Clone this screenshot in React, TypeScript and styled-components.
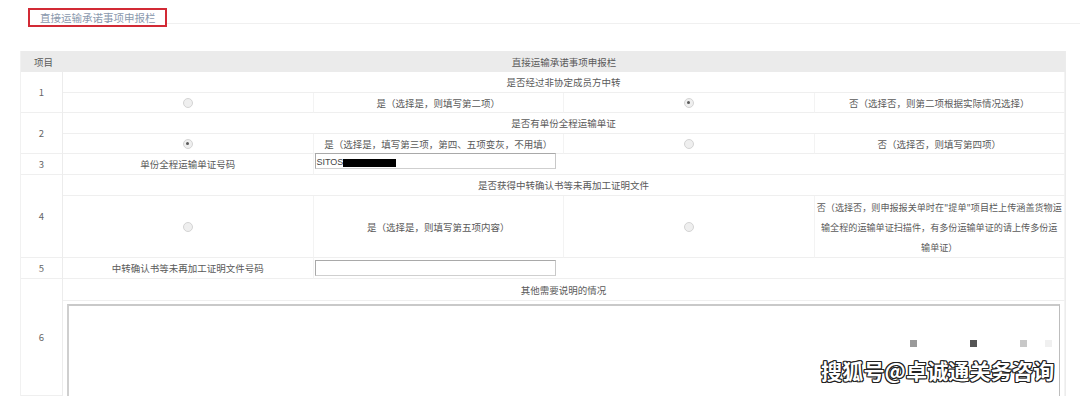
import React from "react";
import styled, { createGlobalStyle } from "styled-components";

const GlobalStyle = createGlobalStyle`
  html, body {
    margin: 0;
    padding: 0;
    background: #ffffff;
    font-family: "Noto Sans CJK SC", "Noto Sans", sans-serif;
  }
  #root {
    width: 1080px;
    height: 396px;
    overflow: hidden;
  }
`;

const Page = styled.div`
  position: relative;
  width: 1080px;
  height: 396px;
  overflow: hidden;
  background: #fff;
`;

const TitleBar = styled.div`
  display: flex;
  align-items: flex-start;
  padding: 8px 0 0 28px;
  height: 51px;
  box-sizing: border-box;
`;

const TitleBox = styled.div`
  border: 2px solid #d22a35;
  height: 19px;
  box-sizing: border-box;
  padding: 0 9px 0 10px;
  display: flex;
  align-items: center;
  font-size: 10.5px;
  color: #8a98ad;
  white-space: nowrap;
`;

const TitleRule = styled.div`
  flex: 1;
  height: 15px;
  border-bottom: 1px solid #f0f0f0;
`;

const Table = styled.div`
  margin-left: 20px;
  width: 1044px;
  display: grid;
  grid-template-columns: 42px repeat(4, 1fr);
  grid-template-rows: 21px 21px 20px 21px 20px 21px 21px 62px 21px 22px 95px;
  border-left: 1px solid #f1f1f1;
  border-right: 1px solid #ececec;
  color: #5a5a5a;
  font-size: 9.5px;
`;

const Cell = styled.div<{ $span?: number; $rows?: number; $align?: "left" | "center" }>`
  grid-column: span ${({ $span }) => $span ?? 1};
  grid-row: span ${({ $rows }) => $rows ?? 1};
  display: flex;
  align-items: center;
  justify-content: ${({ $align }) => ($align === "left" ? "flex-start" : "center")};
  border-bottom: 1px solid #efefef;
  border-right: 1px solid #f3f3f3;
  box-sizing: border-box;
  white-space: nowrap;
  min-width: 0;
`;

const HeadCell = styled(Cell)`
  background: #ebebeb;
  border-bottom: none;
  border-right: none;
  padding-left: ${({ $align }) => ($align === "left" ? "13px" : "0")};
`;

const NumCell = styled(Cell)`
  border-right: 1px solid #ececec;
  color: #666;
`;

const NoteCell = styled(Cell)`
  text-align: center;
  line-height: 20px;
  font-size: 9.1px;
  padding: 0;
`;

const Radio = styled.span<{ $checked?: boolean }>`
  width: 8px;
  height: 8px;
  border-radius: 50%;
  border: 1px solid #d4d4d4;
  background: #efefef;
  display: flex;
  align-items: center;
  justify-content: center;

  &::after {
    content: "";
    width: 3px;
    height: 3px;
    border-radius: 50%;
    background: #5a5a5a;
    display: ${({ $checked }) => ($checked ? "block" : "none")};
  }
`;

const FieldCell = styled(Cell)`
  padding-left: 1px;
`;

const TextInput = styled.div<{ $lift?: number }>`
  width: 241px;
  height: 16px;
  box-sizing: border-box;
  border: 1px solid #a9a9a9;
  border-right-color: #c8c8c8;
  border-bottom-color: #cfcfcf;
  display: flex;
  align-items: flex-end;
  padding: 0 0 1px 1px;
  font-family: "Liberation Sans", sans-serif;
  font-size: 9px;
  color: #444;
  margin-top: ${({ $lift }) => -($lift ?? 0)}px;
`;

const Redacted = styled.span`
  display: inline-block;
  width: 53px;
  height: 8px;
  background: #000;
`;

const AreaCell = styled(Cell)`
  align-items: flex-start;
  padding: 3px 4px 0 4px;
  border-bottom: none;
`;

const TextArea = styled.div`
  flex: 1;
  height: 130px;
  flex-shrink: 0;
  border: 1px solid #bdbdbd;
  border-top: 2px solid #c9c9c9;
  border-left: 2px solid #cfcfcf;
  background: #fff;
`;

const Watermark = styled.div`
  position: absolute;
  left: 821px;
  top: 355px;
  font-size: 21px;
  font-weight: 700;
  color: #fff;
  letter-spacing: 0.2px;
  white-space: nowrap;
  text-shadow:
    1px 0 0 #222, -1px 0 0 #222, 0 1px 0 #222, 0 -1px 0 #222,
    1px 1px 0 #222, -1px -1px 0 #222, 1px -1px 0 #222, -1px 1px 0 #222;
`;

const Pixel = styled.div<{ $x: number; $y: number; $c: string }>`
  position: absolute;
  left: ${({ $x }) => $x}px;
  top: ${({ $y }) => $y}px;
  width: 7px;
  height: 7px;
  background: ${({ $c }) => $c};
`;

export default function App() {
  return (
    <>
      <GlobalStyle />
      <Page>
        <TitleBar>
          <TitleBox>直接运输承诺事项申报栏</TitleBox>
          <TitleRule />
        </TitleBar>

        <Table>
          <HeadCell $align="left">项目</HeadCell>
          <HeadCell $span={4}>直接运输承诺事项申报栏</HeadCell>

          <NumCell $rows={2}>1</NumCell>
          <Cell $span={4}>是否经过非协定成员方中转</Cell>
          <Cell><Radio /></Cell>
          <Cell>是（选择是，则填写第二项）</Cell>
          <Cell><Radio $checked /></Cell>
          <Cell>否（选择否，则第二项根据实际情况选择）</Cell>

          <NumCell $rows={2}>2</NumCell>
          <Cell $span={4}>是否有单份全程运输单证</Cell>
          <Cell><Radio $checked /></Cell>
          <Cell>是（选择是，填写第三项，第四、五项变灰，不用填）</Cell>
          <Cell><Radio /></Cell>
          <Cell>否（选择否，则填写第四项）</Cell>

          <NumCell>3</NumCell>
          <Cell>单份全程运输单证号码</Cell>
          <FieldCell $span={3} $align="left">
            <TextInput $lift={7}>SITOS<Redacted /></TextInput>
          </FieldCell>

          <NumCell $rows={2}>4</NumCell>
          <Cell $span={4}>是否获得中转确认书等未再加工证明文件</Cell>
          <Cell><Radio /></Cell>
          <Cell>是（选择是，则填写第五项内容）</Cell>
          <Cell><Radio /></Cell>
          <NoteCell>
            <div>
              否（选择否，则申报报关单时在"提单"项目栏上传涵盖货物运
              <br />
              输全程的运输单证扫描件，有多份运输单证的请上传多份运
              <br />
              输单证）
            </div>
          </NoteCell>

          <NumCell>5</NumCell>
          <Cell>中转确认书等未再加工证明文件号码</Cell>
          <FieldCell $span={3} $align="left">
            <TextInput $lift={1} />
          </FieldCell>

          <NumCell $rows={2}>6</NumCell>
          <Cell $span={4}>其他需要说明的情况</Cell>
          <AreaCell $span={4}>
            <TextArea />
          </AreaCell>
        </Table>

        <Pixel $x={910} $y={340} $c="#9a9a9a" />
        <Pixel $x={970} $y={340} $c="#555555" />
        <Pixel $x={1020} $y={340} $c="#c8c8c8" />
        <Pixel $x={1045} $y={340} $c="#f0f0f0" />
        <Watermark>搜狐号@卓诚通关务咨询</Watermark>
      </Page>
    </>
  );
}
